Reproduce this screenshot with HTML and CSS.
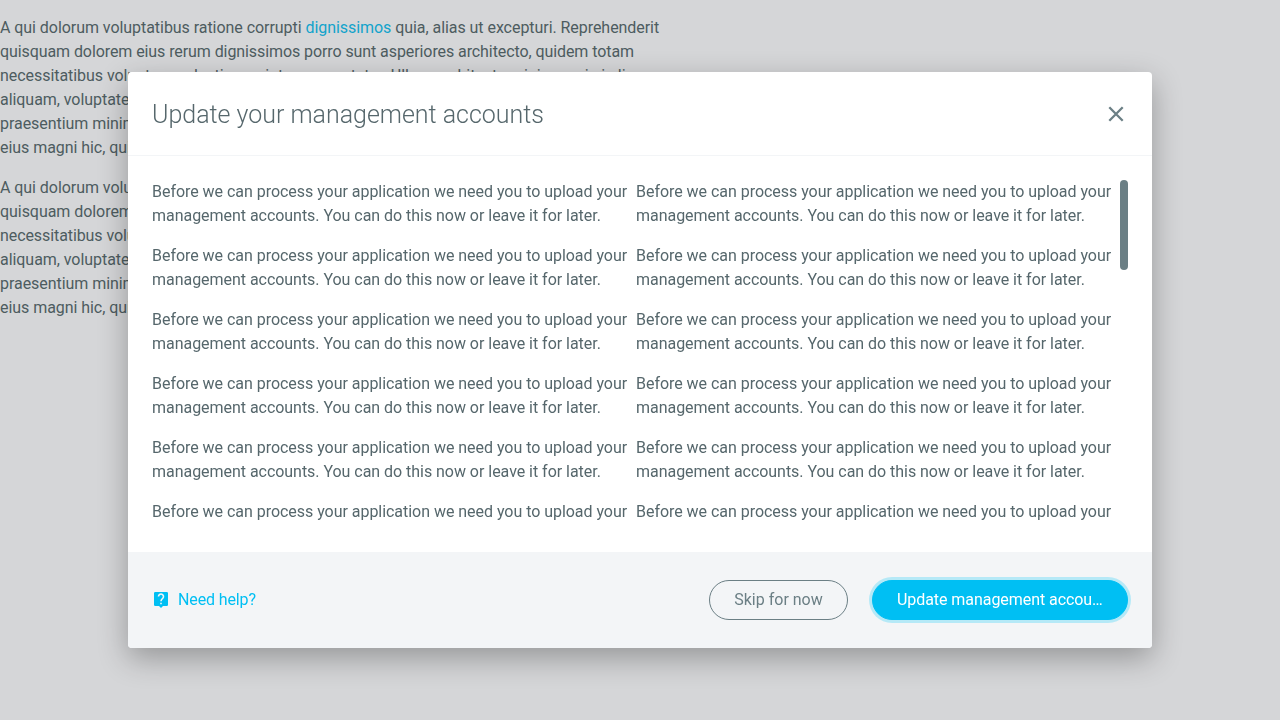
FILE: index.html
```html
<!DOCTYPE html>
<html lang="en">
<head>
<meta charset="utf-8">
<title>Update your management accounts</title>
<link rel="stylesheet" href="styles.css">
</head>
<body>
<main class="page">
<p>A qui dolorum voluptatibus ratione corrupti <a class="page-link">dignissimos</a> quia, alias ut excepturi. Reprehenderit<br><span class="tight">quisquam dolorem eius rerum dignissimos porro sunt asperiores architecto, quidem totam</span><br>necessitatibus voluptas molestiae a sint a consectetur. Ullam architecto minima quia in li<br>aliquam, voluptate<br>praesentium minima<br>eius magni hic, quia</p>
<p>A qui dolorum voluptat<br>quisquam dolorem<br><span class="tight">necessitatibus volup</span><br>aliquam, voluptate<br>praesentium minima<br>eius magni hic, quia</p>
</main>
<div class="overlay">
<section class="dialog" role="dialog">
<header class="dialog-header">
<h1 class="dialog-title">Update your management accounts</h1>
<svg class="close" viewBox="0 0 24 24"><path d="M5.300 5.300 18.700 18.700M18.700 5.300 5.300 18.700"/></svg>
</header>
<div class="dialog-body">
<div class="scroll">
<div class="column">
<p>Before we can process your application we need you to upload your management accounts. You can do this now or leave it for later.</p>
<p>Before we can process your application we need you to upload your management accounts. You can do this now or leave it for later.</p>
<p>Before we can process your application we need you to upload your management accounts. You can do this now or leave it for later.</p>
<p>Before we can process your application we need you to upload your management accounts. You can do this now or leave it for later.</p>
<p>Before we can process your application we need you to upload your management accounts. You can do this now or leave it for later.</p>
<p>Before we can process your application we need you to upload your</p>
</div>
<div class="column">
<p>Before we can process your application we need you to upload your management accounts. You can do this now or leave it for later.</p>
<p>Before we can process your application we need you to upload your management accounts. You can do this now or leave it for later.</p>
<p>Before we can process your application we need you to upload your management accounts. You can do this now or leave it for later.</p>
<p>Before we can process your application we need you to upload your management accounts. You can do this now or leave it for later.</p>
<p>Before we can process your application we need you to upload your management accounts. You can do this now or leave it for later.</p>
<p>Before we can process your application we need you to upload your</p>
</div>
</div>
<div class="scroll-thumb"></div>
</div>
<footer class="dialog-footer">
<a class="help"><svg class="help-icon" viewBox="0 0 18 18"><path class="bubble" d="M3.200 1h11.600A1.200 1.200 0 0 1 16 2.200v11.600a1.200 1.200 0 0 1-1.200 1.200H11l-2 2-2-2H3.200A1.200 1.200 0 0 1 2 13.800V2.200A1.200 1.200 0 0 1 3.200 1z"/><path class="mark" d="M6.500 5.600a2.500 2.500 0 1 1 4.300 1.700C9.800 8.300 9 8.700 9 10.300M9 11.700v1.500"/></svg>Need help?</a>
<button class="button secondary">Skip for now</button>
<button class="button primary"><span class="label">Update management accou…</span></button>
</footer>
</section>
</div>
</body>
</html>
```
FILE: styles.css
```css
* { box-sizing: border-box; }
body {
  margin: 0;
  height: 720px;
  overflow: hidden;
  background: #d5d6d8;
  color: #4d5c60;
  font: 16px/24px Roboto, sans-serif;
}
.page { padding-top: 16px; width: 670px; white-space: nowrap; letter-spacing: -.053px; }
.tight { letter-spacing: -.085px; }
p { margin: 0 0 16px; }
.page-link { color: #12a3cb; }
.overlay {
  position: fixed;
  inset: 0;
  display: flex;
  align-items: center;
  justify-content: center;
}
.dialog {
  width: 1024px;
  height: 576px;
  display: flex;
  flex-direction: column;
  border-radius: 4px;
  overflow: hidden;
  background: #fff;
  color: #56676c;
  box-shadow: 0 10px 30px rgba(0, 0, 0, .3);
}
.dialog-header {
  height: 84px;
  padding: 0 24px;
  display: flex;
  align-items: center;
  justify-content: space-between;
  border-bottom: 1px solid #f3f5f7;
}
.dialog-title { margin: 0; padding-top: 2px; font-size: 25px; font-weight: 300; line-height: 36px; letter-spacing: -.02px; }
.close { width: 24px; height: 24px; fill: none; stroke: #6b7f85; stroke-width: 2.3; }
.dialog-body { height: 396px; padding: 24px; display: flex; letter-spacing: -.036px; }
.scroll { flex: 1; display: grid; grid-template-columns: 1fr 1fr; overflow: hidden; }
.scroll-thumb { width: 8px; height: 90px; border-radius: 4px; background: #6b7f85; }
.dialog-footer {
  height: 96px;
  padding: 0 24px;
  display: flex;
  align-items: center;
  gap: 24px;
  background: #f3f5f7;
}
.help { margin-right: auto; display: flex; align-items: center; gap: 8px; color: #00bff3; letter-spacing: -.13px; }
.help-icon { width: 18px; height: 18px; }
.bubble { fill: #00bff3; }
.mark { fill: none; stroke: #f3f5f7; stroke-width: 1.6; }
.button {
  height: 40px;
  padding: 0 24px;
  border: 1px solid #6b7f85;
  border-radius: 20px;
  background: transparent;
  color: #6b7f85;
  font: 16px/24px Roboto, sans-serif;
}
.secondary { width: 139px; padding: 0 23px; white-space: nowrap; }
.primary {
  width: 256px;
  padding-right: 22px;
  border-color: #00bff3;
  background: #00bff3;
  color: #fff;
  box-shadow: 0 0 0 3px #b5e9f7;
}
.label { display: block; white-space: nowrap; text-align: left; letter-spacing: -.06px; }
```
